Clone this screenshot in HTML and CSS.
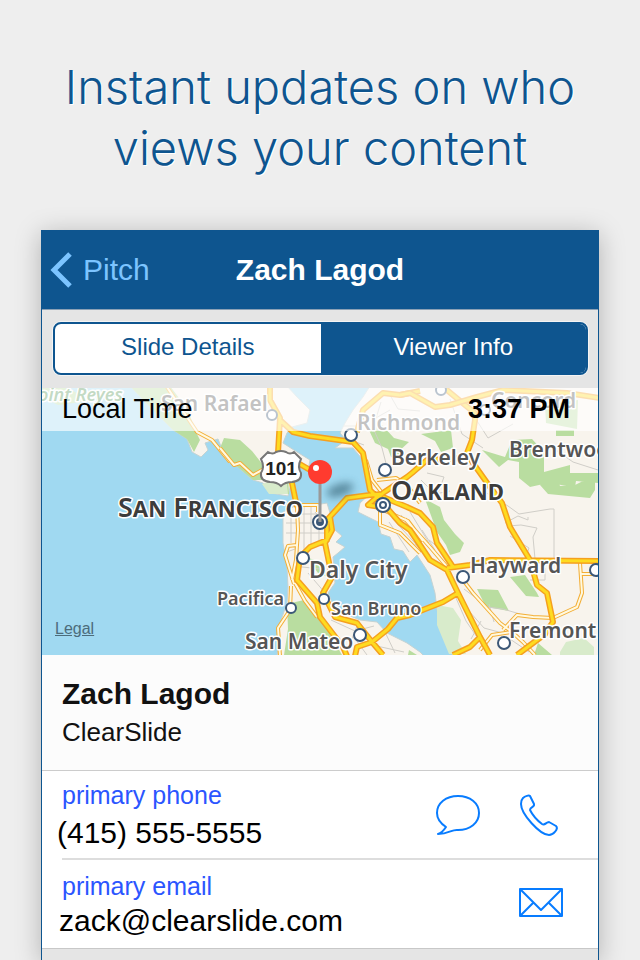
FILE: index.html
```html
<!DOCTYPE html>
<html lang="en">
<head>
<meta charset="utf-8">
<meta name="viewport" content="width=device-width, initial-scale=1">
<title>Viewer Info</title>
<link rel="stylesheet" href="styles.css">
</head>
<body>
<h1 class="headline">Instant updates on who<br>views your content</h1>
<main class="phone">
  <header class="nav">
    <a class="back" href="#">
      <svg class="chevron" viewBox="0 0 22 36" aria-hidden="true"><path d="M20 2 4 18 20 34"/></svg>
      Pitch
    </a>
    <h2 class="nav-title">Zach Lagod</h2>
  </header>
  <div class="segments">
    <button class="segment" type="button">Slide Details</button>
    <button class="segment selected" type="button">Viewer Info</button>
  </div>
  <section class="map">
    <svg class="map-art" viewBox="42 388 556 267" preserveAspectRatio="xMidYMid slice">
      <defs>
        <filter id="soft" x="-50%" y="-80%" width="200%" height="260%"><feGaussianBlur stdDeviation="4"/></filter>
        <path id="major" d="M270 386V400L280 418 278 453 292 483 297 507 M280 420 293 432 310 436 353 442 363 453 370 490 377 497 M357 432 363 410 383 393 400 395 420 391 M442 386 465 405 475 413V420L472 440 467 453 473 463 490 487 502 503 510 527 530 560 537 585 547 593 553 622 545 634 533 643 517 655 M377 499 383 493 407 477 412 473 427 460 467 458 M327 520 347 498 370 495 383 494 M377 497 368 505 387 508 400 523 410 530 430 560 447 570 458 593 480 637 490 655 M383 497 407 507 420 513 433 527 437 543 453 567 M447 568 470 565 490 560 598 561 M458 593 443 602 410 615 397 618 388 629 372 642 M330 517 332 530 325 543 332 577 323 593 335 617 357 623 372 642 383 655 M327 520 327 540 310 547 300 557 297 580 317 603 320 617 343 647 347 656 M372 642 357 647 355 656 M480 637 470 647 453 655"/>
        <path id="arterial" d="M165 384 197 432 212 440 230 462 M297 507 298 530 296 560 292 580 M297 545 288 546 285 555 294 584 M291 586 290 610 278 628 280 656 M295 583 305 601 317 617 M297 505H318V512 M380 507V525L400 533 420 553 M377 480 396 478 407 485 420 503 M366 460 372 480 383 494 M463 580 473 593 500 623 512 632 M503 630 517 615 533 617 553 618 577 607 582 593 580 563 M580 574H594 M405 519 430 547 448 568 M480 650 492 635 512 632 523 642 535 655 M383 510 408 521 423 541"/>
      </defs>
      <rect class="water" x="42" y="386" width="556" height="271"/>
      <path class="land" d="M130 386 155 412 173 430 187 439 192 452 201 457 208 450 205 443 218 439 224 454 233 463 253 480 263 483 270 493 288 496 291 483 298 463 308 471 310 460 297 452 283 443 287 433 292 427 307 423 310 410 297 397 287 386Z"/>
      <path class="land" d="M370 386 363 397 353 410 345 423 340 433 346 440 335 448H353L363 460 368 477 372 492 360 503 358 512 378 522 381 534 390 537 394 549 403 551 410 562 417 555 430 575 435 593 437 610 443 630 453 657H600V386Z"/>
      <path class="land" d="M297 505 283 512V543L287 567 288 587 287 603 280 623 277 657H425L420 652 407 643 387 633 377 622 360 620 343 613 332 602 328 593 335 583 334 570 333 557 338 553 345 547 336 542 342 536 335 530 330 513 327 503 315 505Z"/>
      <path class="park" d="M42 386H65L90 401 58 405 42 397Z"/>
      <path class="park" d="M130 386H170L188 410 196 432 200 440 194 452 187 439 173 430 155 412Z M220 448 224 438 240 440 252 451 263 465 266 480 253 480 233 463Z M266 484 288 474 289 494 270 493Z M369 430 382 425 394 438 409 442 398 452 404 460 391 457 388 449 375 443Z M421 434 451 430 453 448 441 452 435 441Z M482 450 505 457 512 440 532 439 544 452V472L570 465V473H598V483L576 481 575 487 548 483 530 487 519 478V462L508 460 499 467Z M540 485 557 478 560 486 575 485 595 475V490L590 498 548 494Z M425 499 440 507 444 520 455 534 464 543 460 552 450 555 446 545 437 532Z M510 577 525 575 537 593 539 597 526 596Z M477 589 498 590 509 611 486 607Z M556 430H574V436H556Z M545 405 578 400 577 429 546 423Z M306 557 320 562 330 578 318 573Z"/>
      <path class="meadow" d="M437 605 453 608 461 620 458 641 466 654H449L437 625Z M560 652 566 642 584 638 594 647V655H560Z M262 484 286 476 288 494 269 494Z"/>
      <path class="park" d="M287 604 304 600 322 620 342 655H284L288 629Z M534 655 538 643 552 655Z M409 650 417 655H408Z"/>
      <path class="street" d="M288 514H317M286 523H322M286 533H325M291 513V543M304 507V554M311 506V546M319 505V545M315 512 331 530M284 553 295 549M293 566 321 569M308 573 326 594M331 620 355 631 374 626M359 621 349 646M356 640 367 655M372 645 404 652M385 632 395 653M381 402 373 428 382 448 388 471M374 419 390 410M344 426H360M345 438 364 445M390 395 398 409 420 411M450 399 462 434 483 448M470 410 488 438 513 424M427 473 444 477 438 493M421 480 435 494 450 491M480 489 508 506 519 514 550 509H554V562M505 523 518 516 528 520V517M508 526 521 525 537 528 533 537 535 559M510 536 529 548 524 562M429 540 443 551M415 544 438 566M422 530 435 550M464 589 488 607 503 609 520 614M456 598 466 621 479 640M469 611 484 628 506 634M481 621 471 639M489 604 494 622M507 637 529 652M392 518 423 552M401 515 428 555M410 512 429 543M389 522 409 552M545 568V580H530M522 565 510 571M556 450 573 462 598 470"/>
      <use href="#arterial" class="arterial-edge"/><use href="#arterial" class="arterial-fill"/>
      <path class="arterial-edge" d="M220 448 234 465 240 463 253 475 264 469"/>
      <path class="arterial-fill" d="M220 448 234 465 240 463 253 475 264 469"/>
      <use href="#major" class="major-edge"/><use href="#major" class="major-fill"/>
      <path class="major-edge" d="M400 395 410 393 435 407 450 405 477 397 503 390 567 393 600 398M298 463 310 470"/>
      <path class="major-fill" d="M400 395 410 393 435 407 450 405 477 397 503 390 567 393 600 398M298 463 310 470"/>
      <g class="dots">
        <circle cx="272" cy="415" r="5"/><circle cx="351" cy="435" r="6"/><circle cx="385" cy="470" r="6"/><circle cx="303" cy="558" r="6"/><circle cx="291" cy="608" r="5"/><circle cx="324" cy="599" r="5"/><circle cx="360" cy="635" r="6"/><circle cx="463" cy="577" r="6"/><circle cx="504" cy="643" r="6"/><circle cx="596" cy="570" r="6"/><circle cx="441" cy="390" r="5"/><circle cx="485" cy="410" r="5"/><circle cx="383" cy="505" r="7"/><circle cx="383" cy="505" r="3"/><circle cx="320" cy="522" r="7"/><circle class="center" cx="320" cy="522" r="3"/>
      </g>
      <g class="labels">
        <text class="region" x="38" y="401">oint Reyes</text>
        <text class="town" x="161" y="411">San Rafael</text>
        <text class="town" x="357" y="430">Richmond</text>
        <text class="town" x="491" y="408">Concord</text>
        <text class="town" x="391" y="465">Berkeley</text>
        <text class="town" x="509" y="457">Brentwood</text>
        <text class="city" x="118" y="517">San Francisco</text>
        <text class="city" x="391" y="500">Oakland</text>
        <text class="large" x="309" y="578">Daly City</text>
        <text x="217" y="605">Pacifica</text>
        <text x="331" y="615">San Bruno</text>
        <text class="town" x="245" y="649">San Mateo</text>
        <text class="town" x="470" y="573">Hayward</text>
        <text class="town" x="509" y="638">Fremont</text>
      </g>
      <path class="shield" d="M268 452q5 3 8 0 5-2 10 0 4 3 8 0l7 7q-4 8 0 14 1 8-9 9-7 0-11 4-4-4-11-4-10-1-9-9 4-6 0-14Z"/>
      <text class="route" x="281" y="475">101</text>
      <ellipse class="pin-shadow" cx="340" cy="490" rx="14" ry="6" transform="rotate(-18 340 490)" filter="url(#soft)"/>
      <path class="pin-stem" d="M320 482V522"/><circle class="pin-head" cx="320" cy="472" r="12"/><circle class="pin-shine" cx="316" cy="468" r="3"/>
    </svg>
    <div class="time"><span>Local Time</span><strong>3:37 PM</strong></div>
    <a class="legal" href="#">Legal</a>
  </section>
  <section class="person">
    <h3 class="name">Zach Lagod</h3>
    <p class="company">ClearSlide</p>
  </section>
  <section class="contact">
    <div class="details">
      <p class="kind">primary phone</p>
      <p class="number">(415) 555-5555</p>
    </div>
    <button class="action" type="button" aria-label="Message"><svg class="icon" viewBox="0 0 46 44"><path d="M11 34C5 30 2 25 2 20 2 10 11 3 23 3s21 7 21 17-9 17-21 17c-6-1-9 4-20 4 4-1 6-4 8-7Z"/></svg></button>
    <button class="action" type="button" aria-label="Call"><svg class="icon" viewBox="0 0 46 44"><path d="M5 5C7 3 11 2 12 3L16 11C17 14 12 14 12 17 15 23 20 28 24 31 27 33 28 29 31 29L38 33C41 36 35 42 31 42 22 42 3 21 3 11 3 8 4 6 5 5Z"/></svg></button>
  </section>
  <section class="contact">
    <div class="details">
      <p class="kind">primary email</p>
      <p class="email">zack@clearslide.com</p>
    </div>
    <button class="action" type="button" aria-label="Email"><svg class="icon mail" viewBox="0 0 46 44"><path d="M2 8H44V35H2ZM2 8 23 29 44 8M2 35 15 22M44 35 31 22"/></svg></button>
  </section>
</main>
</body>
</html>
```

FILE: styles.css
```css
* { box-sizing: border-box; }
html { height: 100%; }
body {
  margin: 0;
  min-height: 100%;
  display: flex;
  flex-direction: column;
  background: #eee;
  color: #111;
  font-family: "Liberation Sans", Arial, sans-serif;
  overflow-x: hidden;
}
h1, h2, h3, p { margin: 0; }
a { color: inherit; text-decoration: none; }
button { font: inherit; border: 0; padding: 0; background: none; cursor: pointer; }

.headline {
  padding: 56px 20px 52px;
  text-align: center;
  color: #0e558f;
  font: 300 47px/61px Inter, "Liberation Sans", sans-serif;
  text-shadow: 1px 1px 0 #fff;
}
.phone {
  flex: 1;
  margin: 0 41px;
  border: solid #0e558f;
  border-width: 0 1px;
  background: #e5e5e5;
  box-shadow: 0 4px 24px rgba(0, 0, 0, .25);
}
.nav {
  display: grid;
  grid-template-columns: 1fr auto 1fr;
  align-items: center;
  height: 80px;
  border-bottom: 1px solid #8ba0b5;
  background: #0e558f;
  color: #fff;
  font-size: 30px;
}
.back { display: flex; align-items: center; gap: 11px; padding-left: 8px; color: #7cc4ff; }
.chevron { width: 22px; height: 36px; fill: none; stroke: currentColor; stroke-width: 5; }
.nav-title { font-size: 30px; font-weight: 700; }

.segments {
  display: flex;
  margin: 12px 10px 13px 11px;
  border: 2px solid #0e558f;
  border-radius: 8px;
  background: #fff;
  box-shadow: 0 0 0 1px #f4f4f4;
  overflow: hidden;
}
.segment { flex: 1; height: 49px; padding-bottom: 4px; color: #0e558f; font-size: 24px; }
.segment.selected { background: #0e558f; color: #fff; }

.map { position: relative; overflow: hidden; }
.map-art { display: block; width: 100%; }
.time {
  position: absolute;
  inset: 0 0 auto;
  display: flex;
  justify-content: space-between;
  align-items: center;
  height: 43px;
  padding: 0 28px 0 20px;
  background: rgba(255, 255, 255, .65);
  color: #000;
  font-size: 27px;
}
.legal {
  position: absolute;
  left: 13px;
  bottom: 17px;
  color: #4c6c7b;
  font-size: 16px;
  text-decoration: underline;
}

.water { fill: #a0d9f1; }
.land { fill: #f8f4ed; stroke: #c5d3d3; stroke-width: 1; }
.park { fill: #b9dda0; }
.meadow { fill: #d8ebcb; }
.street { fill: none; stroke: #d0cec8; stroke-width: 1; }
.major-edge, .major-fill, .arterial-edge, .arterial-fill { fill: none; stroke-linejoin: round; }
.major-edge { stroke: #f5a01f; stroke-width: 6; }
.major-fill { stroke: #fedb20; stroke-width: 3; }
.arterial-edge { stroke: #f3ae35; stroke-width: 4; }
.arterial-fill { stroke: #fff9e0; stroke-width: 2; }
.dots { fill: #fff; stroke: #3b5777; stroke-width: 2; }
.center { fill: #3b5777; }
.labels {
  fill: #555;
  stroke: #fff;
  stroke-width: 3;
  stroke-linejoin: round;
  paint-order: stroke;
  font: 600 18px "Noto Sans", sans-serif;
}
.town { font-size: 21px; }
.large { font-size: 23px; }
.city { font-size: 27px; font-variant: small-caps; fill: #3c3c3c; }
.region { font-style: italic; fill: #559558; }
.shield { fill: #fff; stroke: #777; stroke-width: 2; }
.route { fill: #222; text-anchor: middle; font: 700 19px "Liberation Sans", sans-serif; }
.pin-shadow { fill: #315d70; opacity: .65; }
.pin-stem { stroke: #999; stroke-width: 3; }
.pin-head { fill: #ff3b2f; }
.pin-shine { fill: #fff; }

.person { padding: 20px 20px 19px; border-bottom: 1px solid #ccc; background: #fcfcfc; }
.name { font-size: 30px; line-height: 38px; }
.company { font-size: 26px; line-height: 37px; padding-top: 1px; }
.contact { display: flex; align-items: center; height: 89px; padding: 0 32px 2px 15px; background: #fff; }
.contact + .contact { border-bottom: 1px solid #c8c8c8; }
.contact:not(:last-child) {
  background: linear-gradient(#ddd, #ddd) 20px 100% / 100% 2px no-repeat #fff;
}
.details { flex: 1; }
.kind { padding-left: 5px; color: #2b55ff; font-size: 25px; line-height: 36px; }
.number, .email { color: #000; font-size: 30px; }
.number { line-height: 40px; }
.email { padding-left: 2px; line-height: 34px; }
.action { width: 50px; height: 48px; margin-left: 33px; }
.icon { display: block; width: 46px; height: 44px; margin: auto; fill: none; stroke: #087cff; stroke-width: 2; stroke-linejoin: round; }
```
